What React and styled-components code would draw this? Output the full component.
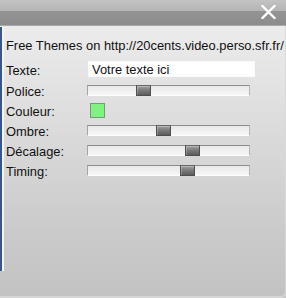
import styled, { createGlobalStyle } from 'styled-components';

const GlobalStyle = createGlobalStyle`
	html, body {
		margin: 0;
		padding: 0;
		background: #c4c4c4;
	}
	body {
		font-family: 'Liberation Sans', Arial, sans-serif;
	}
`;

const Window = styled.div`
	width: 286px;
	height: 298px;
	display: flex;
	flex-direction: column;
	overflow: hidden;
`;

const TitleBar = styled.div`
	height: 26px;
	flex: none;
	display: flex;
	justify-content: flex-end;
	align-items: flex-start;
	padding: 5px 10px 0 0;
	box-sizing: border-box;
	background: linear-gradient(
		to bottom,
		#c3c3c3 0,
		#b4b4b4 11px,
		#939393 11px,
		#8c8c8c 25px,
		#a9a9a9 25px
	);
`;

const CloseButton = styled.button`
	width: 15px;
	height: 14px;
	padding: 0;
	border: 0;
	background: none;
	cursor: pointer;
	display: block;
`;

const Panel = styled.div`
	flex: 1;
	display: flex;
	flex-direction: column;
	padding: 12px 0 0 6px;
	border-right: 1px solid #d9d9d9;
	border-bottom-right-radius: 5px;
	box-shadow: inset 0 -2px 0 #d6d6d6;
	background:
		linear-gradient(to right, #35588b 0 2px, #f3f3f3 2px 4px, transparent 4px) no-repeat 0 1px / 4px 244px,
		linear-gradient(to bottom, #ececec 0, #dadada 110px, #cbcbcb 200px, #c2c2c2 100%);
	color: #111;
	font-size: 12.9px;
	line-height: 15px;
`;

const Credit = styled.div`
	white-space: nowrap;
	margin-bottom: 5px;
`;

const Form = styled.div`
	display: grid;
	grid-template-columns: 81px 1fr;
	grid-template-rows: 22px repeat(5, 20px);
	align-items: center;
`;

const Label = styled.label`
	white-space: nowrap;
	padding-top: 2px;
`;

const TextInput = styled.input`
	width: 167px;
	height: 16px;
	box-sizing: border-box;
	margin: 0 0 0 1px;
	padding: 0 0 0 3px;
	border: 1px solid #fbfbfb;
	background: #fff;
	font-family: 'Liberation Sans', Arial, sans-serif;
	font-size: 12.9px;
	color: #111;
	outline: none;
`;

const Track = styled.div`
	position: relative;
	width: 163px;
	height: 11px;
	box-sizing: border-box;
	background: linear-gradient(to bottom, #e9e9e9, #f6f6f6);
	border-top: 1px solid #8c8c8c;
	border-left: 1px solid #a5a5a5;
	border-bottom: 1px solid #fdfdfd;
	border-right: 1px solid #b5b5b5;
`;

const Thumb = styled.div`
	position: absolute;
	top: -1px;
	width: 15px;
	height: 11px;
	box-sizing: border-box;
	border: 1px solid #4e4e4e;
	border-top-color: #666;
	background: linear-gradient(to bottom, #a4a4a4 0, #7c7c7c 45%, #5c5c5c 100%);
	box-shadow: inset 1px 1px 0 rgba(255, 255, 255, 0.25);
`;

const Swatch = styled.div`
	width: 15px;
	height: 15px;
	box-sizing: border-box;
	margin-left: 3px;
	background: ${props => props.$color};
	border: 1px solid #7d977d;
`;

function Slider({ value }) {
	return (
		<Track>
			<Thumb style={{ left: `${value * 147 - 1}px` }} />
		</Track>
	);
}

const sliders = [
	{ name: 'Ombre', value: 0.47 },
	{ name: 'Décalage', value: 0.67 },
	{ name: 'Timing', value: 0.63 },
];

function App() {
	return (
		<Window>
			<GlobalStyle />
			<TitleBar>
				<CloseButton aria-label='Fermer'>
					<svg width='15' height='14' viewBox='0 0 15 14'>
						<path d='M1.5 1 L13.5 13 M13.5 1 L1.5 13' stroke='#fff' strokeWidth='2.3' strokeLinecap='square' />
					</svg>
				</CloseButton>
			</TitleBar>
			<Panel>
				<Credit>Free Themes on http://20cents.video.perso.sfr.fr/</Credit>
				<Form>
					<Label>Texte:</Label>
					<TextInput defaultValue='Votre texte ici' />
					<Label>Police:</Label>
					<Slider value={0.33} />
					<Label>Couleur:</Label>
					<Swatch $color='#7ff37f' />
					{sliders.map(s => [
						<Label key={`${s.name}-l`}>{s.name}:</Label>,
						<Slider key={`${s.name}-s`} value={s.value} />,
					])}
				</Form>
			</Panel>
		</Window>
	);
}

export default App;
